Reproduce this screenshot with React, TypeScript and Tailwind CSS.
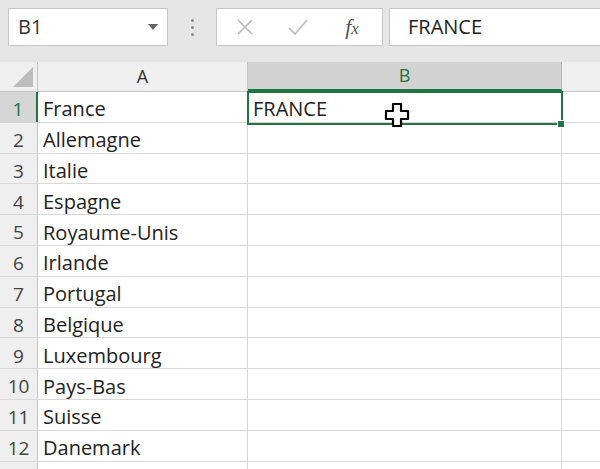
const countries = [
  'France',
  'Allemagne',
  'Italie',
  'Espagne',
  'Royaume-Unis',
  'Irlande',
  'Portugal',
  'Belgique',
  'Luxembourg',
  'Pays-Bas',
  'Suisse',
  'Danemark',
  '',
]

const font = { fontFamily: '"Open Sans", Lato, sans-serif' }

function PlusCursor() {
  return (
    <svg width="26" height="26" viewBox="0 0 26 26" className="absolute left-[384px] top-[102px]">
      <path
        d="M9 2h8v7h7v8h-7v7H9v-7H2V9h7z"
        fill="#fff"
        stroke="#000"
        strokeWidth="2.2"
        strokeLinejoin="round"
      />
    </svg>
  )
}

export default function App() {
  return (
    <div className="relative w-[600px] h-[469px] overflow-hidden bg-white text-[#222]" style={font}>
      {/* Formula bar */}
      <div className="h-[62px] bg-[#e6e6e6] flex items-start pt-2 pl-2">
        <div className="w-[160px] h-[38px] bg-white border border-[#c8c8c8] flex items-center justify-between pl-[9px] pr-[8px]">
          <span className="text-[20px] text-[#333]">B1</span>
          <svg width="12" height="8" viewBox="0 0 12 8">
            <path d="M1 1h10L6 7z" fill="#666" />
          </svg>
        </div>
        <div className="w-[48px] h-[38px] flex flex-col items-center justify-center gap-[4px]">
          <span className="w-[3px] h-[3px] rounded-full bg-[#8a8a8a]" />
          <span className="w-[3px] h-[3px] rounded-full bg-[#8a8a8a]" />
          <span className="w-[3px] h-[3px] rounded-full bg-[#8a8a8a]" />
        </div>
        <div className="w-[167px] h-[38px] bg-white border border-[#c8c8c8] flex items-center">
          <div className="w-[56px] flex justify-center">
            <svg width="18" height="18" viewBox="0 0 18 18">
              <path d="M2 2l14 14M16 2L2 16" stroke="#b8b8b8" strokeWidth="1.6" />
            </svg>
          </div>
          <div className="w-[50px] flex justify-center">
            <svg width="22" height="18" viewBox="0 0 22 18">
              <path d="M2 10l6 6L20 2" stroke="#c0c0c0" strokeWidth="1.8" fill="none" />
            </svg>
          </div>
          <div className="w-[58px] flex justify-center">
            <span
              className="italic text-[22px] text-[#555] leading-none"
              style={{ fontFamily: '"Liberation Serif", serif' }}
            >
              f<span className="text-[17px]">x</span>
            </span>
          </div>
        </div>
        <div className="ml-[6px] flex-1 h-[38px] bg-white border border-[#c8c8c8] border-r-0 flex items-center pl-[18px]">
          <span className="text-[20px] text-[#222]">FRANCE</span>
        </div>
      </div>

      {/* Grid */}
      <div className="relative">
        <div className="flex h-[30px] bg-[#efefef] border-b border-[#c4c4c4]">
          <div className="w-[38px] border-r border-[#c4c4c4] flex items-end justify-end pr-[4px] pb-[4px]">
            <svg width="20" height="20" viewBox="0 0 20 20">
              <path d="M20 0v20H0z" fill="#bdbdbd" />
            </svg>
          </div>
          <div className="w-[210px] border-r border-[#c4c4c4] flex items-center justify-center text-[18px] text-[#333]">
            A
          </div>
          <div className="w-[314px] bg-[#d3d3d3] border-r border-[#b5b5b5] border-b-2 border-b-[#217346] flex items-center justify-center text-[18px] text-[#217346]">
            B
          </div>
          <div className="flex-1" />
        </div>

        {countries.map((c, i) => (
          <div key={i} className="flex h-[30.8px] border-b border-[#d8d8d8]">
            <div
              className={
                i === 0
                  ? 'w-[38px] bg-[#d6d6d6] border-r-2 border-[#217346] flex items-center justify-center pt-[5px] text-[19px] text-[#217346]'
                  : 'w-[38px] bg-[#efefef] border-r border-[#c4c4c4] flex items-center justify-center pt-[5px] text-[19px] text-[#444]'
              }
            >
              {i < 12 ? i + 1 : ''}
            </div>
            <div className="w-[210px] border-r border-[#d8d8d8] flex items-center pl-[5px] pt-[5px] text-[20px]">
              {c}
            </div>
            <div className="w-[314px] border-r border-[#d8d8d8] flex items-center pl-[5px] pt-[5px] text-[20px]">
              {i === 0 ? 'FRANCE' : ''}
            </div>
            <div className="flex-1" />
          </div>
        ))}

        {/* Selection */}
        <div className="absolute left-[247px] top-[29px] w-[316px] h-[34px] border-2 border-[#217346]" />
        <div className="absolute left-[557px] top-[58px] w-[8px] h-[8px] bg-[#217346] border border-white" />
      </div>

      <PlusCursor />
    </div>
  )
}
